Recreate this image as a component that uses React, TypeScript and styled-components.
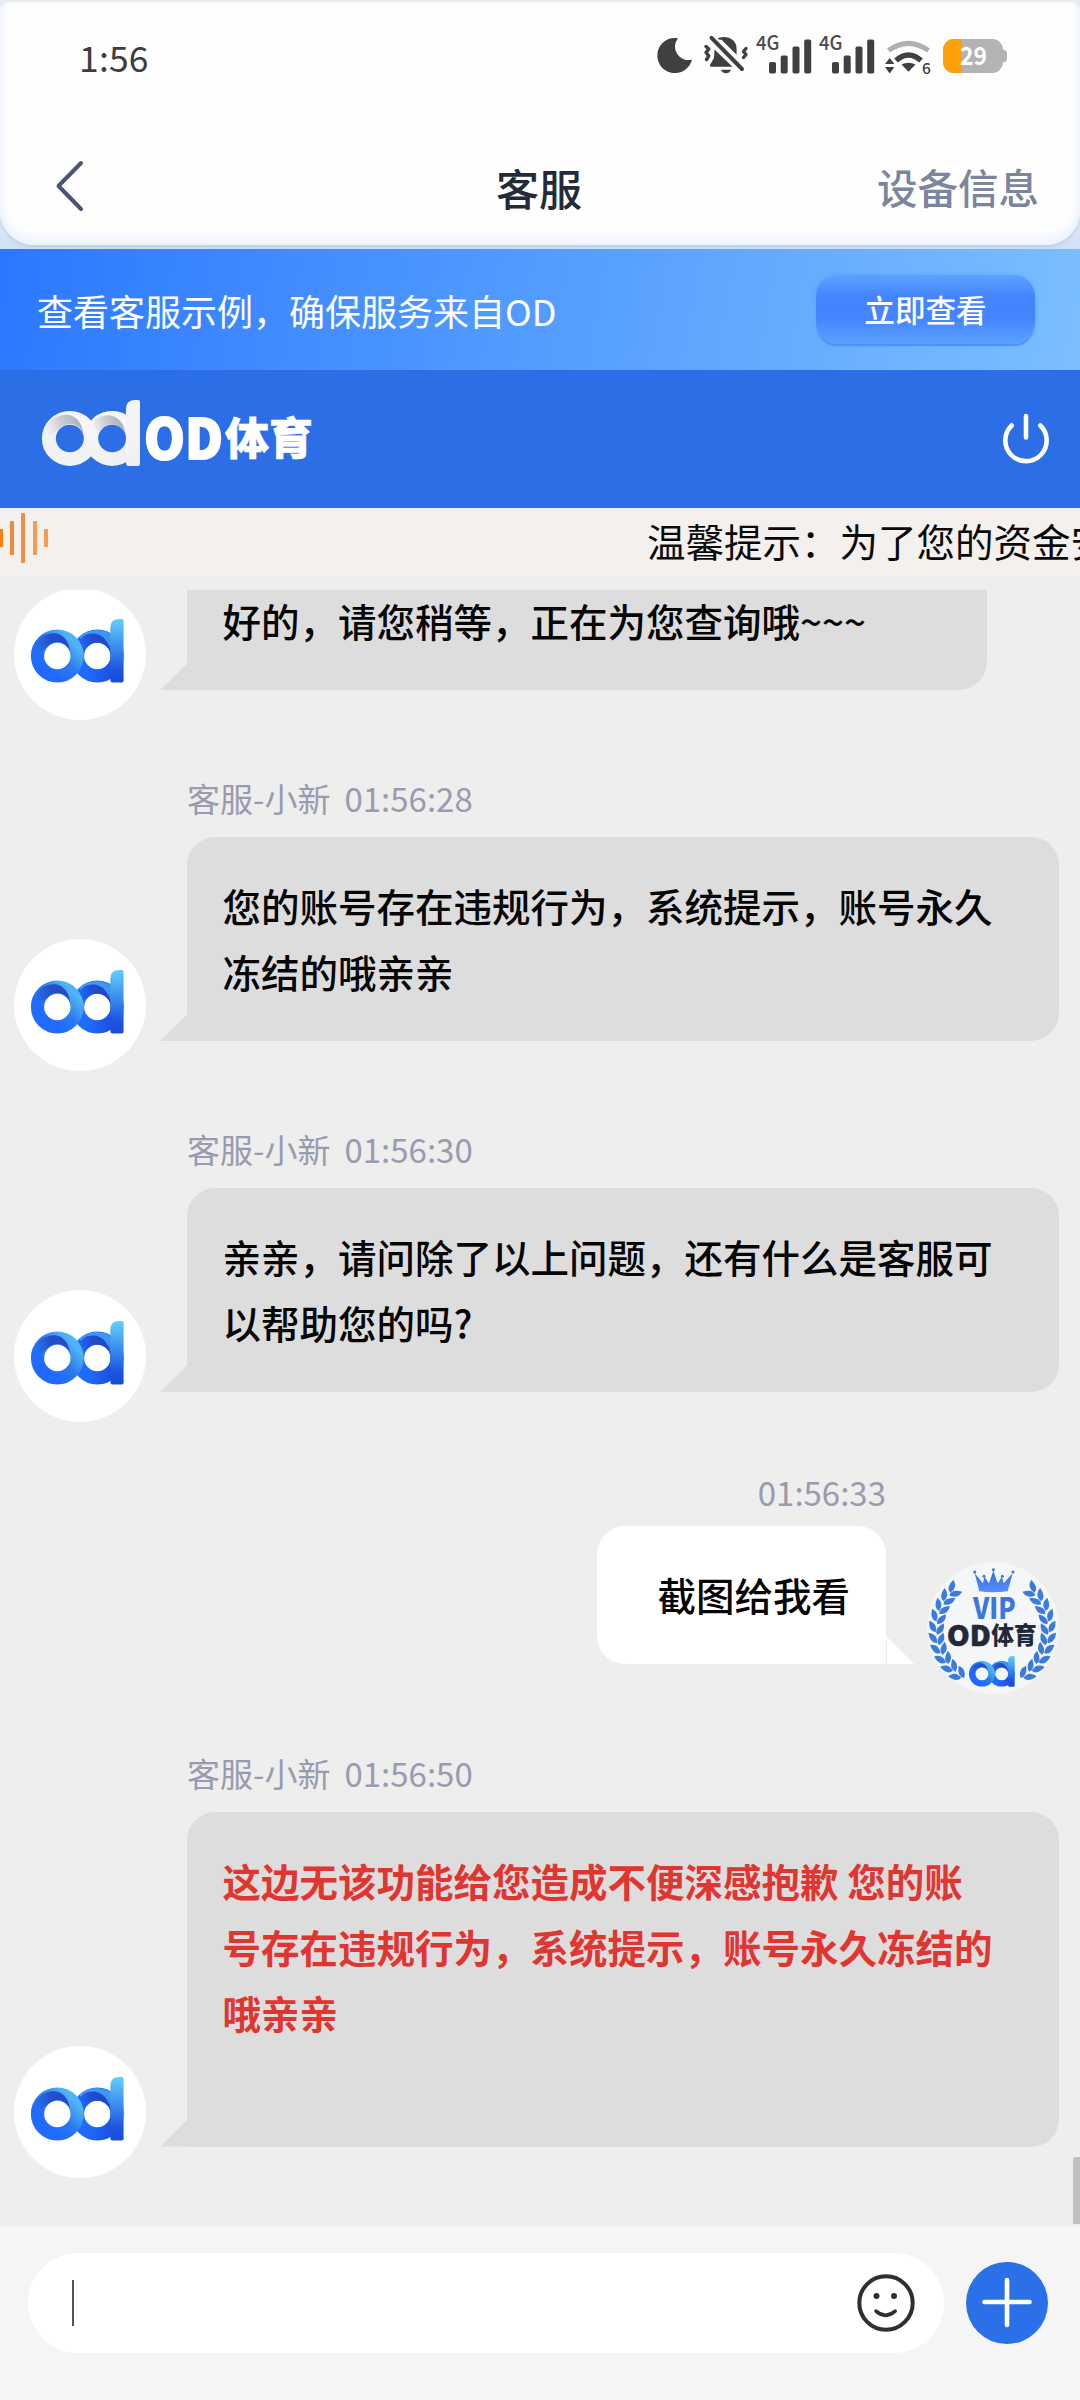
import React from "react";
import styled, { createGlobalStyle, css } from "styled-components";

const sans = `"Noto Sans CJK SC", "Noto Sans", sans-serif`;
const kai = `KaiTi, STKaiti, "Noto Sans CJK SC", sans-serif`;

const GlobalStyle = createGlobalStyle`
  *, *::before, *::after { box-sizing: border-box; }
  body { margin: 0; background: #f5f5f5; font-family: ${sans}; }
  svg { display: block; flex: none; overflow: visible; }
`;

const Screen = styled.div`
  width: 1080px;
  height: 2400px;
  display: flex;
  flex-direction: column;
  overflow: hidden;
  background: #eeeeec;
`;

/* ---------- top card ---------- */

const TopArea = styled.header`
  height: 249px;
  flex: none;
  padding: 2px 0 4px;
  background: linear-gradient(#e8edf4 0, #e8edf4 200px, #cfe0f6 249px);
`;

const TopCard = styled.div`
  height: 243px;
  display: flex;
  flex-direction: column;
  background: #fefefe;
  border-radius: 8px 8px 34px 34px;
  box-shadow: inset 0 -12px 14px -6px #e9f1fd, inset 6px 0 8px -5px #e9f1fd,
    inset -6px 0 8px -5px #e9f1fd, 0 2px 3px rgba(160, 188, 228, 0.5);
`;

const StatusBar = styled.div`
  height: 106px;
  display: flex;
  align-items: center;
  justify-content: space-between;
  padding: 0 73px 0 79px;
`;

const Clock = styled.span`
  font-size: 35.5px;
  line-height: 48px;
  color: #3d3d3d;
  letter-spacing: 0.2px;
  padding-top: 3px;
`;

const StatusIcons = styled.div`
  display: flex;
  align-items: center;
`;

const Gap = styled.i<{ $w: number }>`
  width: ${(p) => p.$w}px;
`;

const NavBar = styled.nav`
  flex: 1;
  display: grid;
  grid-template-columns: 1fr auto 1fr;
  align-items: center;
  padding: 20px 41px 0 55px;
`;

const NavTitle = styled.h1`
  margin: 1px 0 0 -16px;
  font: 500 43px/60px ${kai};
  color: #232b38;
`;

const NavAction = styled.button`
  justify-self: end;
  border: 0;
  padding: 0;
  background: none;
  font: 500 40.5px/58px ${kai};
  color: #7b869d;
`;

/* ---------- banner ---------- */

const Banner = styled.section`
  height: 121px;
  flex: none;
  display: flex;
  align-items: center;
  justify-content: space-between;
  padding: 0 45px 0 37px;
  background: linear-gradient(100deg, #2b78ff 0%, #5aa2ff 58%, #7bbfff 100%);
`;

const BannerText = styled.p`
  margin: 0;
  font: 400 36px/52px ${kai};
  color: #fff;
`;

const BannerButton = styled.button`
  width: 219px;
  height: 69px;
  padding: 0 0 1px;
  border: 0;
  border-radius: 21px;
  background: linear-gradient(#5ba2ff 0%, #4484ff 32%, #4484ff 62%, #5ba2ff 100%);
  box-shadow: 0 3px 1px -1px #4d8ff8, 0 0 5px rgba(80, 150, 255, 0.6);
  font: 500 30.6px/44px ${sans};
  color: #fff;
`;

/* ---------- brand bar ---------- */

const BrandBar = styled.section`
  height: 138px;
  flex: none;
  display: flex;
  align-items: center;
  justify-content: space-between;
  padding: 0 30px 0 42px;
  background: #2b6ee6;
`;

const BrandLogo = styled.div`
  display: flex;
  align-items: flex-end;
  gap: 5px;
  padding-bottom: 12px;
`;

/* ---------- notice ---------- */

const Notice = styled.section`
  height: 68px;
  flex: none;
  display: flex;
  justify-content: space-between;
  overflow: hidden;
  background: #f4f0ed;
`;

const NoticeWave = styled.div`
  display: flex;
  align-items: center;
  gap: 7.2px;
  height: 60px;
  margin-left: -1px;
`;

const WaveBar = styled.i<{ $h: number; $c: string }>`
  width: 4px;
  height: ${(p) => p.$h}px;
  border-radius: 1px;
  background: ${(p) => p.$c};
`;

const NoticeText = styled.p`
  width: 433px;
  margin: 0;
  white-space: nowrap;
  overflow: hidden;
  font: 400 38.5px/64px ${kai};
  color: #0a0a0a;
`;

/* ---------- chat ---------- */

const ChatArea = styled.main`
  flex: 1;
  min-height: 0;
  display: flex;
  padding-top: 14px;
  position: relative;
`;

const ChatList = styled.div`
  flex: 1;
  display: flex;
  flex-direction: column;
  justify-content: flex-end;
  overflow: hidden;
  padding-bottom: 48.5px;
`;

const ScrollThumb = styled.div`
  position: absolute;
  right: 0;
  bottom: 2px;
  width: 7px;
  height: 67px;
  border-radius: 2px 0 0 0;
  background: #c1c1c1;
`;

const MessageRow = styled.article<{ $mine?: boolean; $top?: number }>`
  flex: none;
  display: flex;
  flex-direction: ${(p) => (p.$mine ? "row-reverse" : "row")};
  align-items: flex-end;
  gap: 41px;
  margin-top: ${(p) => p.$top ?? 54}px;
  padding: 0 21px 0 14px;
`;

const Avatar = styled.div<{ $bg?: string }>`
  width: 132px;
  height: 132px;
  flex: none;
  display: flex;
  align-items: flex-start;
  overflow: hidden;
  border-radius: 50%;
  background: ${(p) => p.$bg ?? "#fff"};
`;

const AvatarMark = styled.div`
  padding: 31px 0 0 16.5px;
`;

const Column = styled.div<{ $mine?: boolean; $drop?: number }>`
  display: flex;
  flex-direction: column;
  align-items: ${(p) => (p.$mine ? "flex-end" : "flex-start")};
  padding-bottom: ${(p) => p.$drop ?? 30}px;
`;

const Meta = styled.div<{ $mine?: boolean }>`
  display: flex;
  gap: 14px;
  margin-bottom: ${(p) => (p.$mine ? 10 : 15)}px;
  font-size: 33px;
  line-height: 48px;
  color: #9a9ab0;
`;

const agentTail = css`
  &::before {
    content: "";
    position: absolute;
    left: -27px;
    bottom: 0;
    width: 27.5px;
    height: 27px;
    background: inherit;
    clip-path: polygon(100% 0, 100% 100%, 0 100%);
  }
`;

const myTail = css`
  &::before {
    content: "";
    position: absolute;
    right: -28px;
    bottom: 0;
    width: 27px;
    height: 27px;
    background: inherit;
    clip-path: polygon(0 0, 100% 100%, 0 100%);
  }
`;

const Bubble = styled.div<{ $mine?: boolean; $w?: number; $h?: number; $alert?: boolean }>`
  position: relative;
  width: ${(p) => (p.$w ? `${p.$w}px` : "auto")};
  min-height: ${(p) => p.$h ?? 0}px;
  padding: 35px 36px 37px ${(p) => (p.$mine ? 60.5 : 35.5)}px;
  border-radius: ${(p) => (p.$mine ? "28px 28px 0 28px" : "28px 28px 28px 0")};
  background: ${(p) => (p.$mine ? "#fff" : "#dddddd")};
  font-size: 38.5px;
  font-weight: ${(p) => (p.$alert ? 700 : 500)};
  line-height: 66px;
  color: ${(p) => (p.$alert ? "#e03632" : "#060606")};
  white-space: pre;
  ${(p) => (p.$mine ? myTail : agentTail)}
`;

/* ---------- composer ---------- */

const Composer = styled.footer`
  height: 174px;
  flex: none;
  display: flex;
  align-items: flex-start;
  justify-content: space-between;
  padding: 27px 32px 0 28px;
  background: #f5f5f5;
`;

const InputPill = styled.div`
  width: 916px;
  height: 100px;
  display: flex;
  align-items: center;
  justify-content: space-between;
  padding: 0 29px 0 44px;
  border-radius: 50px;
  background: #fff;
`;

const Caret = styled.i`
  width: 2px;
  height: 46px;
  background: #555;
`;

const PlusButton = styled.button`
  width: 82px;
  height: 82px;
  margin-top: 9px;
  padding: 0;
  display: grid;
  place-items: center;
  border: 0;
  border-radius: 50%;
  background: #2b70e8;
`;

/* ---------- drawings ---------- */

type MarkProps = { width: number; height?: number; id: string; tone?: "blue" | "white"; x?: number; y?: number };

const OdMark = ({ width, height, id, tone = "blue", x, y }: MarkProps) => {
  const blue = tone === "blue";
  const c = blue
    ? { hi: "#4fb4f4", mid: "#2b78ee", lo: "#1f6bff", deep: "#1a4bd6", stemTop: "#62d0fb", fold: "#2248c4" }
    : { hi: "#f6f6f8", mid: "#f1f2f4", lo: "#f1f2f4", deep: "#eceef1", stemTop: "#f4f5f6", fold: "#a9acb4" };
  return (
    <svg x={x} y={y} width={width} height={height ?? (width * 63.5) / 92.6} viewBox="0 0 92.6 63.5" preserveAspectRatio="none">
      <defs>
        <linearGradient id={`${id}r`} x1="0.95" y1="0.2" x2="0.3" y2="0.8">
          <stop offset="0" stopColor={c.hi} />
          <stop offset="0.55" stopColor={c.mid} />
          <stop offset="1" stopColor={c.lo} />
        </linearGradient>
        <linearGradient id={`${id}d`} x1="0.3" y1="0.7" x2="1" y2="0.8">
          <stop offset="0" stopColor={c.lo} />
          <stop offset="1" stopColor={c.deep} />
        </linearGradient>
        <linearGradient id={`${id}s`} x1="0" y1="0" x2="0" y2="1">
          <stop offset="0" stopColor={c.stemTop} />
          <stop offset="0.8" stopColor={blue ? "#1b55e2" : "#f1f2f4"} />
          <stop offset="1" stopColor={c.deep} />
        </linearGradient>
        <linearGradient id={`${id}f`} x1="1" y1="0.4" x2="0" y2="0.6">
          <stop offset="0" stopColor={c.fold} />
          <stop offset="0.5" stopColor={c.fold} stopOpacity={blue ? 0.9 : 0.6} />
          <stop offset="1" stopColor={c.fold} stopOpacity="0" />
        </linearGradient>
      </defs>
      <circle cx="66.3" cy="37" r="19.8" fill="none" stroke={`url(#${id}d)`} strokeWidth="13.2" />
      <path d="M48 18 A26.4 26.4 0 0 1 84 18 L80 30 Q74 16 62 15 Q54 14 50 20Z" fill={c.hi} opacity={blue ? 0.65 : 1} />
      <path d="M49 20 C58 11 78 11 79.5 37 A13.2 13.2 0 0 0 57 27.5 L48 33Z" fill={`url(#${id}f)`} />
      <path d="M79.3 9 Q79.3 0 88 0 H91 Q92.6 0 92.6 1.6 V61.5 Q92.6 63.5 91 63.5 H81.5 Q79.3 63.5 79.3 60Z" fill={`url(#${id}s)`} />
      <circle cx="26.3" cy="37" r="19.8" fill="none" stroke={`url(#${id}r)`} strokeWidth="13.2" />
      <path d="M5 24 C16 9 39 10 39.5 37 A13.2 13.2 0 0 0 16 28 L4 36Z" fill={`url(#${id}f)`} />
    </svg>
  );
};

const BrandWord = () => (
  <svg width="168" height="46" viewBox="0 0 168 46">
    <g fill="#fff" stroke="#fff" fontFamily={sans} fontWeight="900">
      <text x="-1" y="39" fontSize="55" strokeWidth="1.8" textLength="79" lengthAdjust="spacingAndGlyphs">OD</text>
      <text x="80" y="35" fontSize="44" strokeWidth="0.6" textLength="88" lengthAdjust="spacingAndGlyphs">体育</text>
    </g>
  </svg>
);

const MoonIcon = () => (
  <svg width="33" height="40" viewBox="0 0 33 40">
    <path d="M19 3.2 A17.6 17.6 0 1 0 33 24.6 A13.4 13.4 0 0 1 19 3.2Z" fill="#404040" />
  </svg>
);

const MuteIcon = () => (
  <svg width="44" height="40" viewBox="0 0 44 40">
    <path d="M12.5 4.4 C19 -.6 33 2.4 32.6 14 V19.8 L17.5 4.8Z M10.5 14.5 L28.5 31.8 H8 Q4.6 31.8 6.5 29 L10 23Z" fill="#404040" />
    <path d="M17 34.7 H27 Q25.5 38.2 22 38.2 Q18.5 38.2 17 34.7Z" fill="#404040" />
    <path d="M7 2.2 L38 34" stroke="#fefefe" strokeWidth="8" />
    <path d="M7.5 2.8 L38 34" stroke="#404040" strokeWidth="4" strokeLinecap="round" />
    <path d="M2 11.5 L4.8 14 L2 17.5 L4.8 20.8 L2.5 24.5 M42 13.5 L39.5 16.5 L42 19.5 L39.5 22.5" fill="none" stroke="#404040" strokeWidth="3.4" strokeLinejoin="round" strokeLinecap="round" />
  </svg>
);

const SignalIcon = () => (
  <svg width="55" height="40" viewBox="0 0 55 40">
    <text x="0" y="15" fontFamily={sans} fontSize="19.5" fontWeight="500" fill="#4a4a4a" textLength="23.5" lengthAdjust="spacingAndGlyphs">4G</text>
    <g fill="#404040">
      <rect x="13" y="27" width="7" height="11.5" rx="1.8" />
      <rect x="24.7" y="20.5" width="7" height="18" rx="1.8" />
      <rect x="36.5" y="11.5" width="7" height="27" rx="1.8" />
      <rect x="48.2" y="4.5" width="7" height="34" rx="1.8" />
    </g>
  </svg>
);

const WifiIcon = () => (
  <svg width="46" height="40" viewBox="0 0 46 40">
    <path d="M3.5 15.5 Q23.5 1.2 43.5 15.5" fill="none" stroke="#b0b0b0" strokeWidth="5" />
    <path d="M11 25.5 Q23.5 14.5 36 25.5" fill="none" stroke="#404040" strokeWidth="5.5" />
    <path d="M16.5 29.5 Q23.5 25.8 30.5 29.5 L23.5 36.8Z" fill="#404040" />
    <path d="M0 29 L4.7 23 L9.4 29Z M0 32 H9.4 L4.7 38.5Z" fill="#404040" />
    <text x="37" y="39" fontFamily={sans} fontSize="15.5" fontWeight="500" fill="#404040">6</text>
  </svg>
);

const BatteryIcon = () => (
  <svg width="64" height="40" viewBox="0 0 64 40">
    <clipPath id="cell"><rect x="0" y="4" width="60" height="34" rx="11" /></clipPath>
    <g clipPath="url(#cell)">
      <rect x="0" y="4" width="60" height="34" fill="#b3b3b3" />
      <rect x="0" y="4" width="19" height="34" fill="#ff9f0a" />
    </g>
    <path d="M60 14.5 Q64 15.5 64 18 V24 Q64 26.5 60 27.5Z" fill="#b3b3b3" />
    <text x="30.5" y="30" textAnchor="middle" fontFamily={sans} fontSize="25" fontWeight="700" fill="#fff" textLength="27" lengthAdjust="spacingAndGlyphs">29</text>
  </svg>
);

const BackIcon = () => (
  <svg width="28" height="52" viewBox="0 0 28 52">
    <path d="M26 2 L3.5 25 L26 48" fill="none" stroke="#4b5474" strokeWidth="4" strokeLinecap="round" strokeLinejoin="round" />
  </svg>
);

const PowerIcon = () => (
  <svg width="48" height="52" viewBox="0 0 48 52">
    <path d="M9.7 12.5 A20.7 20.7 0 1 0 38.3 12.5 M24 3 V24.5" fill="none" stroke="#fff" strokeWidth="4.6" strokeLinecap="round" />
  </svg>
);

const SmileIcon = () => (
  <svg width="58" height="58" viewBox="0 0 58 58">
    <circle cx="29" cy="29" r="26.7" fill="none" stroke="#2f2f2f" strokeWidth="4" />
    <circle cx="19.5" cy="22" r="3" fill="#2f2f2f" />
    <circle cx="37" cy="22" r="3" fill="#2f2f2f" />
    <path d="M19 37.2 Q28.5 45.5 38.2 37.2" fill="none" stroke="#2f2f2f" strokeWidth="3.6" strokeLinecap="round" />
  </svg>
);

const PlusIcon = () => (
  <svg width="50" height="50" viewBox="0 0 50 50">
    <path d="M2.5 24 H47.5 M25 2 V47" stroke="#fff" strokeWidth="4.6" strokeLinecap="round" />
  </svg>
);

const leafSteps = Array.from({ length: 10 }, (_, i) => 226 - i * 11);

const Leaves = () => (
  <g fill="#3b7bdc">
    {leafSteps.map((deg) => {
      const place = (r: number, tilt: number, lag: number) => {
        const b = (deg * Math.PI) / 180 + lag;
        const x = 217 + r * Math.cos(b);
        const y = 225 + r * Math.sin(b);
        return (
          <path
            key={r}
            d="M-20 2 Q-10 -17 20 -2 Q2 19 -20 2Z"
            transform={`translate(${x} ${y}) rotate(${deg + 90 + tilt})`}
          />
        );
      };
      return <g key={deg}>{place(179, -26, 0.03)}{place(155, 34, -0.01)}</g>;
    })}
  </g>
);

const VipBadge = () => (
  <svg width="132" height="132" viewBox="22 20 396 396">
    <defs>
      <linearGradient id="crown" x1="0" y1="0" x2="0" y2="1">
        <stop offset="0" stopColor="#2f6fd8" />
        <stop offset="1" stopColor="#5b8dff" />
      </linearGradient>
    </defs>
    <Leaves />
    <g transform="translate(436 0) scale(-1 1)"><Leaves /></g>
    <path d="M179 108 L165 54 L190 84 L194 64 L208 84 L221 46 L234 84 L247 64 L252 84 L279 54 L264 108 Q221 114 179 108Z" fill="url(#crown)" />
    <g fill="#3b78dc">
      <circle cx="165" cy="50" r="4.5" />
      <circle cx="193" cy="63" r="4.5" />
      <circle cx="221" cy="43" r="4.5" />
      <circle cx="248" cy="63" r="4.5" />
      <circle cx="280" cy="50" r="4.5" />
    </g>
    <g fontFamily={sans} fontWeight="900">
      <text x="160" y="192" fontSize="88" fill="#3b78dc" textLength="128" lengthAdjust="spacingAndGlyphs">VIP</text>
      <text x="82" y="271" fontSize="86" fill="#222a3a" stroke="#222a3a" strokeWidth="2" textLength="131" lengthAdjust="spacingAndGlyphs">OD</text>
      <text x="215" y="266" fontSize="70" fill="#222a3a" textLength="136" lengthAdjust="spacingAndGlyphs">体育</text>
    </g>
    <OdMark id="vip" x={148} y={302} width={137} height={92} />
  </svg>
);

/* ---------- messages ---------- */

type Message = {
  time: string;
  mine?: boolean;
  lines: string[];
  width?: number;
  height?: number;
  alert?: boolean;
  top?: number;
  drop?: number;
};

const messages: Message[] = [
  { time: "01:56:26", lines: ["好的，请您稍等，正在为您查询哦~~~"], width: 800 },
  { time: "01:56:28", lines: ["您的账号存在违规行为，系统提示，账号永久", "冻结的哦亲亲"], width: 872 },
  { time: "01:56:30", lines: ["亲亲，请问除了以上问题，还有什么是客服可", "以帮助您的吗?"], width: 872 },
  { time: "01:56:33", mine: true, lines: ["截图给我看"], top: 46 },
  {
    time: "01:56:50",
    lines: ["这边无该功能给您造成不便深感抱歉 您的账", "号存在违规行为，系统提示，账号永久冻结的", "哦亲亲"],
    width: 872,
    height: 335,
    alert: true,
    top: 54.5,
    drop: 31,
  },
];

const MessageItem = ({ m, index }: { m: Message; index: number }) => (
  <MessageRow $mine={m.mine} $top={m.top}>
    <Avatar $bg={m.mine ? "#f5f6f8" : undefined}>
      {m.mine ? <VipBadge /> : <AvatarMark><OdMark id={`a${index}`} width={92.6} /></AvatarMark>}
    </Avatar>
    <Column $mine={m.mine} $drop={m.drop}>
      <Meta $mine={m.mine}>
        {!m.mine && <span>客服-小新</span>}
        <span>{m.time}</span>
      </Meta>
      <Bubble $mine={m.mine} $w={m.width} $h={m.height} $alert={m.alert}>{m.lines.join("\n")}</Bubble>
    </Column>
  </MessageRow>
);

export default function App() {
  return (
    <Screen>
      <GlobalStyle />
      <TopArea>
        <TopCard>
          <StatusBar>
            <Clock>1:56</Clock>
            <StatusIcons>
              <MoonIcon />
              <Gap $w={12} />
              <MuteIcon />
              <Gap $w={8} />
              <SignalIcon />
              <Gap $w={8} />
              <SignalIcon />
              <Gap $w={11} />
              <WifiIcon />
              <Gap $w={12} />
              <BatteryIcon />
            </StatusIcons>
          </StatusBar>
          <NavBar>
            <BackIcon />
            <NavTitle>客服</NavTitle>
            <NavAction>设备信息</NavAction>
          </NavBar>
        </TopCard>
      </TopArea>
      <Banner>
        <BannerText>查看客服示例，确保服务来自OD</BannerText>
        <BannerButton>立即查看</BannerButton>
      </Banner>
      <BrandBar>
        <BrandLogo>
          <OdMark id="brand" tone="white" width={98} height={66} />
          <BrandWord />
        </BrandLogo>
        <PowerIcon />
      </BrandBar>
      <Notice>
        <NoticeWave>
          <WaveBar $h={18} $c="#ff7d0a" />
          <WaveBar $h={34} $c="#f0883a" />
          <WaveBar $h={50} $c="#ec8d45" />
          <WaveBar $h={34} $c="#f59a50" />
          <WaveBar $h={18} $c="#f59a50" />
        </NoticeWave>
        <NoticeText>温馨提示：为了您的资金安</NoticeText>
      </Notice>
      <ChatArea>
        <ChatList>
          {messages.map((m, i) => <MessageItem key={m.time} m={m} index={i} />)}
        </ChatList>
        <ScrollThumb />
      </ChatArea>
      <Composer>
        <InputPill>
          <Caret />
          <SmileIcon />
        </InputPill>
        <PlusButton aria-label="更多">
          <PlusIcon />
        </PlusButton>
      </Composer>
    </Screen>
  );
}
